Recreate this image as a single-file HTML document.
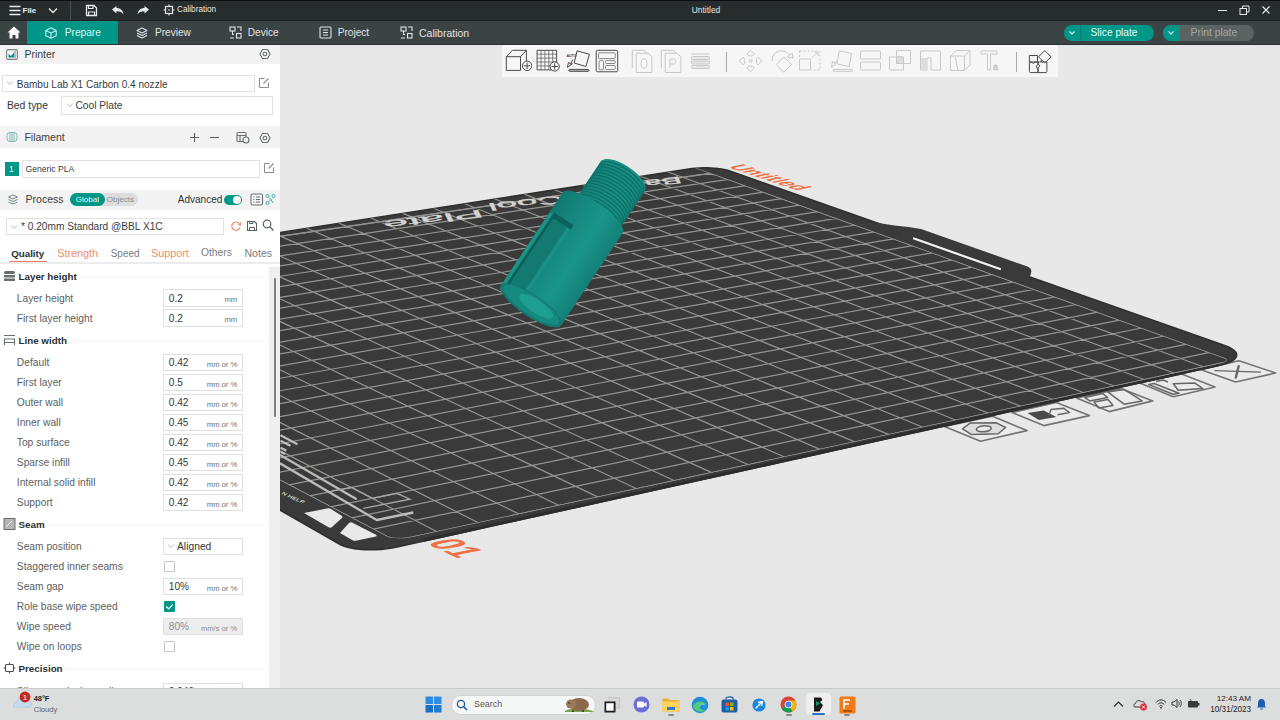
<!DOCTYPE html><html><head><meta charset="utf-8"><style>*{margin:0;padding:0;box-sizing:border-box}
html,body{width:1280px;height:720px;overflow:hidden;background:#e6e6e6;font-family:"Liberation Sans",sans-serif}
.a{position:absolute;white-space:nowrap}
#title{left:0;top:0;width:1280px;height:20px;background:#24292a;border-top:1px solid #101213}
#tabs{left:0;top:20px;width:1280px;height:25px;background:#353c3d}
#side{left:0;top:45px;width:280px;height:643px;background:#fff;overflow:hidden}
#view{left:280px;top:45px;width:1000px;height:643px;background:#e6e6e6;overflow:hidden}
#task{left:0;top:688px;width:1280px;height:32px;background:#dcdcdc;border-top:1px solid #cdcdcd}
.tt{color:#e8ecec;font-size:10.3px}
.hdr{left:0;width:280px;background:#f4f4f4}
.ht{font-size:10.5px;color:#363d3f}
.lbl{font-size:10.3px;color:#5b5f61;left:17px}
.hd{font-size:10px;font-weight:bold;color:#2a2f31;left:18px}
.inp{left:163px;width:80px;height:17px;border:1px solid #dedede;background:#fff}
.val{font-size:10.2px;color:#33393b;left:168px}
.unit{font-size:7.6px;color:#6d7173}
.sep{height:1px;background:#f0f0f0}
</style></head><body><div class="a" style="left:0px;top:0px;width:1280px;height:20px;background:#272c2c;border-top:1px solid #0d0f10"></div>
<div class="a" style="left:0px;top:20px;width:1280px;height:25px;background:#3c4344;border-top:1px solid #1d2122;border-bottom:1px solid #2c3233"></div>
<svg class="a" style="left:9px;top:5px;" width="12" height="11" viewBox="0 0 12 11"><g stroke="#e6e9e9" stroke-width="1.4" stroke-linecap="round"><path d="M1 1.5H11M1 5.5H11M1 9.5H11"/></g></svg>
<div class="a" style="left:22.5px;top:7.03px;font-size:8.0px;line-height:1;color:#e9ecec;font-weight:bold;">File</div>
<svg class="a" style="left:48px;top:7px;" width="10" height="7" viewBox="0 0 10 7"><path d="M1 1.5L5 5.5L9 1.5" fill="none" stroke="#e6e9e9" stroke-width="1.3"/></svg>
<div class="a" style="left:70px;top:1px;width:1px;height:19px;background:#474d4e"></div>
<svg class="a" style="left:85px;top:4px;" width="13" height="13" viewBox="0 0 13 13"><path d="M1.5 1.5H9L11.5 4V11.5H1.5Z" fill="none" stroke="#e6e9e9" stroke-width="1.3" stroke-linejoin="round"/><path d="M3.5 1.5V4.5H8V1.5M3.5 11.5V8H9.5V11.5" fill="none" stroke="#e6e9e9" stroke-width="1.2"/></svg>
<svg class="a" style="left:111px;top:5px;" width="13" height="10" viewBox="0 0 13 10"><path d="M1 4.5L5.5 1V3C9 3 12 5 12.5 9.5C11 7 9 6.2 5.5 6.2V8.5Z" fill="#e6e9e9"/></svg>
<svg class="a" style="left:137px;top:5px;" width="13" height="10" viewBox="0 0 13 10"><path d="M12 4.5L7.5 1V3C4 3 1 5 0.5 9.5C2 7 4 6.2 7.5 6.2V8.5Z" fill="#e6e9e9"/></svg>
<svg class="a" style="left:163px;top:4px;" width="12" height="12" viewBox="0 0 12 12"><rect x="2.5" y="2.5" width="7" height="7" fill="none" stroke="#e6e9e9" stroke-width="1.2"/><path d="M6 0.5V2.5M6 9.5V11.5M0.5 6H2.5M9.5 6H11.5" stroke="#e6e9e9" stroke-width="1.2"/><path d="M4.5 4.5L7.5 7.5M7.5 4.5L4.5 7.5" stroke="#9aa" stroke-width="0.8"/></svg>
<div class="a" style="left:177.0px;top:6.26px;font-size:8.2px;line-height:1;color:#e6e9e9;font-weight:normal;">Calibration</div>
<div class="a" style="left:506.0px;width:400px;text-align:center;top:6.39px;font-size:8.4px;line-height:1;color:#e6e9e9;font-weight:normal;">Untitled</div>
<div class="a" style="left:1218px;top:10px;width:9px;height:1px;background:#e6e9e9"></div>
<svg class="a" style="left:1239px;top:5px;" width="11" height="11" viewBox="0 0 11 11"><rect x="1" y="3.5" width="6.5" height="6" fill="none" stroke="#e6e9e9" stroke-width="1"/><path d="M3.5 3.5V1H10V7H7.5" fill="none" stroke="#e6e9e9" stroke-width="1"/></svg>
<svg class="a" style="left:1261px;top:5px;" width="10" height="10" viewBox="0 0 10 10"><path d="M1.5 1.5L8.5 8.5M8.5 1.5L1.5 8.5" stroke="#e6e9e9" stroke-width="1.2"/></svg>
<svg class="a" style="left:7px;top:26px;" width="14" height="13" viewBox="0 0 14 13"><path d="M7 0.5L13.5 6.5H11.5V12.5H8.5V9H5.5V12.5H2.5V6.5H0.5Z" fill="#fafafa"/></svg>
<div class="a" style="left:27px;top:21px;width:91px;height:23px;background:#009688"></div>
<svg class="a" style="left:45px;top:27px;" width="12" height="12" viewBox="0 0 12 12"><path d="M6 0.8L11.2 3.4V8.8L6 11.3L0.8 8.8V3.4Z M0.8 3.4L6 6L11.2 3.4 M6 6V11.3" fill="none" stroke="#b9f0ea" stroke-width="1.1" stroke-linejoin="round"/></svg>
<div class="a" style="left:64.7px;top:28.37px;font-size:10.2px;line-height:1;color:#d8f6f2;font-weight:normal;">Prepare</div>
<svg class="a" style="left:136px;top:27px;" width="12" height="12" viewBox="0 0 12 12"><g fill="none" stroke="#e0e4e4" stroke-width="1.1" stroke-linejoin="round"><path d="M6 1L11 3.5L6 6L1 3.5Z"/><path d="M1 6L6 8.5L11 6"/><path d="M1 8.5L6 11L11 8.5"/></g></svg>
<div class="a" style="left:155.0px;top:28.45px;font-size:10.1px;line-height:1;color:#e0e4e4;font-weight:normal;">Preview</div>
<svg class="a" style="left:229px;top:26px;" width="13" height="13" viewBox="0 0 13 13"><g fill="none" stroke="#e0e4e4" stroke-width="1.1"><rect x="1" y="1" width="5" height="4"/><rect x="7.5" y="7.5" width="4.5" height="4.5"/><path d="M3.5 5V8.5H5M8 1H12V5M1 12H5"/></g></svg>
<div class="a" style="left:247.8px;top:28.45px;font-size:10.1px;line-height:1;color:#e0e4e4;font-weight:normal;">Device</div>
<svg class="a" style="left:319px;top:26px;" width="13" height="13" viewBox="0 0 13 13"><g fill="none" stroke="#e0e4e4" stroke-width="1.1"><rect x="1" y="1" width="11" height="11" rx="1"/><path d="M4 4H9M4 6.5H9M4 9H9"/></g></svg>
<div class="a" style="left:337.7px;top:28.45px;font-size:10.1px;line-height:1;color:#e0e4e4;font-weight:normal;">Project</div>
<svg class="a" style="left:400px;top:26px;" width="13" height="13" viewBox="0 0 13 13"><g fill="none" stroke="#e0e4e4" stroke-width="1.1"><rect x="1" y="1" width="5" height="4"/><rect x="7.5" y="7.5" width="4.5" height="4.5"/><path d="M3.5 5V8.5H5M8 1H12V5M1 12H5"/></g></svg>
<div class="a" style="left:419.0px;top:28.11px;font-size:10.5px;line-height:1;color:#e0e4e4;font-weight:normal;">Calibration</div>
<div class="a" style="left:1064px;top:25px;width:90px;height:16px;background:#009688;border-radius:8px"></div>
<div class="a" style="left:1080px;top:25px;width:1px;height:16px;background:#0b7d73"></div>
<svg class="a" style="left:1067px;top:29px;" width="10" height="8" viewBox="0 0 10 8"><path d="M2.5 2.5L5 5L7.5 2.5" fill="none" stroke="#d8f6f2" stroke-width="1.1"/></svg>
<div class="a" style="left:1090.5px;top:27.87px;font-size:10.2px;line-height:1;color:#e6fbf8;font-weight:normal;">Slice plate</div>
<div class="a" style="left:1163px;top:25px;width:91px;height:16px;background:#5b6262;border-radius:8px"></div>
<div class="a" style="left:1163px;top:25px;width:17px;height:16px;background:#009688;border-radius:8px 0 0 8px"></div>
<svg class="a" style="left:1166px;top:29px;" width="10" height="8" viewBox="0 0 10 8"><path d="M2.5 2.5L5 5L7.5 2.5" fill="none" stroke="#d8f6f2" stroke-width="1.1"/></svg>
<div class="a" style="left:1190.5px;top:27.70px;font-size:10.4px;line-height:1;color:#a3a8a8;font-weight:normal;">Print plate</div>
<div class="a" style="left:0px;top:45px;width:280px;height:643px;background:#ffffff"></div>
<div class="a" style="left:0px;top:45px;width:280px;height:19px;background:#f3f3f3"></div>
<div class="a" style="left:0px;top:126px;width:280px;height:22px;background:#f3f3f3"></div>
<div class="a" style="left:0px;top:190px;width:280px;height:19.5px;background:#f3f3f3"></div>
<svg class="a" style="left:6px;top:49px;" width="12" height="11" viewBox="0 0 12 11"><rect x="0.6" y="0.6" width="10.8" height="9.8" rx="1.5" fill="none" stroke="#7a8080" stroke-width="1.1"/><path d="M2.5 8.5V5L5 7L8 3.5V8.5Z" fill="#009688"/><path d="M9 2V9" stroke="#7a8080" stroke-width="1"/></svg>
<div class="a" style="left:24.4px;top:49.31px;font-size:10.5px;line-height:1;color:#3a4042;font-weight:normal;">Printer</div>
<svg class="a" style="left:259px;top:48px;" width="12" height="12" viewBox="0 0 12 12"><path d="M0.9 6L3.5 1.5H8.5L11.1 6L8.5 10.5H3.5Z" fill="none" stroke="#6a7072" stroke-width="1.1" stroke-linejoin="round"/><circle cx="6" cy="6" r="1.8" fill="none" stroke="#6a7072" stroke-width="1.1"/></svg>
<div class="a" style="left:2px;top:75px;width:253px;height:17px;border:1px solid #e2e2e2;background:#fff"></div>
<svg class="a" style="left:6px;top:80px;" width="8" height="6" viewBox="0 0 8 6"><path d="M1 1.5L4 4.5L7 1.5" fill="none" stroke="#a9adae" stroke-width="0.9"/></svg>
<div class="a" style="left:16.7px;top:79.69px;font-size:10.05px;line-height:1;color:#3a4042;font-weight:normal;">Bambu Lab X1 Carbon 0.4 nozzle</div>
<svg class="a" style="left:258px;top:77px;" width="12" height="12" viewBox="0 0 12 12"><path d="M6.5 1.5H2.2C1.8 1.5 1.5 1.8 1.5 2.2V9.8C1.5 10.2 1.8 10.5 2.2 10.5H9.8C10.2 10.5 10.5 10.2 10.5 9.8V5.5" fill="none" stroke="#8a8e90" stroke-width="1.1"/><path d="M5.5 6.5L10.5 1.5" stroke="#8a8e90" stroke-width="1.1"/></svg>
<div class="a" style="left:6.9px;top:100.60px;font-size:10.4px;line-height:1;color:#2f3537;font-weight:normal;">Bed type</div>
<div class="a" style="left:61px;top:96px;width:212px;height:19px;border:1px solid #e2e2e2;background:#fff"></div>
<svg class="a" style="left:66px;top:102px;" width="8" height="6" viewBox="0 0 8 6"><path d="M1 1.5L4 4.5L7 1.5" fill="none" stroke="#a9adae" stroke-width="0.9"/></svg>
<div class="a" style="left:75.5px;top:100.77px;font-size:10.2px;line-height:1;color:#3a4042;font-weight:normal;">Cool Plate</div>
<svg class="a" style="left:6px;top:131px;" width="12" height="12" viewBox="0 0 12 12"><g fill="none" stroke="#7fb9b2" stroke-width="1"><rect x="1" y="1.5" width="10" height="9" rx="3"/><path d="M4 1.5V10.5M6 1.5V10.5M8 1.5V10.5"/></g></svg>
<div class="a" style="left:24.4px;top:132.41px;font-size:10.5px;line-height:1;color:#3a4042;font-weight:normal;">Filament</div>
<svg class="a" style="left:189px;top:132px;" width="11" height="11" viewBox="0 0 11 11"><path d="M5.5 1V10M1 5.5H10" stroke="#5a6062" stroke-width="1.1"/></svg>
<svg class="a" style="left:209px;top:132px;" width="11" height="11" viewBox="0 0 11 11"><path d="M1 5.5H10" stroke="#5a6062" stroke-width="1.1"/></svg>
<svg class="a" style="left:236px;top:131px;" width="14" height="13" viewBox="0 0 14 13"><g fill="none" stroke="#6a7072" stroke-width="1.1"><rect x="1" y="1.5" width="9" height="9" rx="1"/><path d="M1 4.5H10M4 4.5V10.5"/><circle cx="10" cy="9" r="3" fill="#f3f3f3"/></g></svg>
<svg class="a" style="left:259px;top:132px;" width="12" height="12" viewBox="0 0 12 12"><path d="M0.9 6L3.5 1.5H8.5L11.1 6L8.5 10.5H3.5Z" fill="none" stroke="#6a7072" stroke-width="1.1" stroke-linejoin="round"/><circle cx="6" cy="6" r="1.8" fill="none" stroke="#6a7072" stroke-width="1.1"/></svg>
<div class="a" style="left:5px;top:162px;width:14px;height:14px;background:#009688"></div>
<div class="a" style="left:9.0px;top:165.30px;font-size:8.5px;line-height:1;color:#e6fbf8;font-weight:normal;">1</div>
<div class="a" style="left:22px;top:160px;width:238px;height:17.5px;border:1px solid #e2e2e2;background:#fff"></div>
<div class="a" style="left:25.5px;top:164.72px;font-size:8.6px;line-height:1;color:#3a4042;font-weight:normal;">Generic PLA</div>
<svg class="a" style="left:263px;top:162px;" width="12" height="12" viewBox="0 0 12 12"><path d="M6.5 1.5H2.2C1.8 1.5 1.5 1.8 1.5 2.2V9.8C1.5 10.2 1.8 10.5 2.2 10.5H9.8C10.2 10.5 10.5 10.2 10.5 9.8V5.5" fill="none" stroke="#8a8e90" stroke-width="1.1"/><path d="M5.5 6.5L10.5 1.5" stroke="#8a8e90" stroke-width="1.1"/></svg>
<svg class="a" style="left:7px;top:194px;" width="12" height="12" viewBox="0 0 12 12"><g fill="none" stroke="#7a8a88" stroke-width="1"><path d="M1.5 3L6 1L10.5 3L6 5Z"/><path d="M1.5 5.5L6 7.5L10.5 5.5M1.5 8L6 10L10.5 8"/></g></svg>
<div class="a" style="left:25.6px;top:194.31px;font-size:10.5px;line-height:1;color:#3a4042;font-weight:normal;">Process</div>
<div class="a" style="left:70px;top:193px;width:68px;height:13px;background:#dddddd;border-radius:7px"></div>
<div class="a" style="left:70px;top:193px;width:35px;height:13px;background:#009688;border-radius:7px"></div>
<div class="a" style="left:75.8px;top:195.93px;font-size:8.0px;line-height:1;color:#e6fbf8;font-weight:normal;">Global</div>
<div class="a" style="left:106.7px;top:195.84px;font-size:8.1px;line-height:1;color:#8a8e90;font-weight:normal;">Objects</div>
<div class="a" style="left:177.8px;top:195.03px;font-size:10.0px;line-height:1;color:#2f3537;font-weight:normal;">Advanced</div>
<div class="a" style="left:224px;top:195px;width:18px;height:10px;background:#009688;border-radius:5px"></div>
<div class="a" style="left:233px;top:196px;width:8px;height:8px;background:#fff;border-radius:4px"></div>
<svg class="a" style="left:250px;top:193px;" width="14" height="13" viewBox="0 0 14 13"><g fill="none" stroke="#6a7072" stroke-width="1.1"><rect x="1" y="1" width="11.5" height="11" rx="1.5"/><path d="M3.5 4H4.5M6 4H10M3.5 6.5H4.5M6 6.5H10M3.5 9H4.5M6 9H10"/></g></svg>
<svg class="a" style="left:265px;top:193px;" width="11" height="13" viewBox="0 0 11 13"><g fill="none" stroke="#4cb3a8" stroke-width="1"><circle cx="2.5" cy="3" r="1.6"/><circle cx="8.5" cy="3" r="1.6"/><circle cx="2.5" cy="10" r="1.6"/><path d="M4 4.5L8.5 10M4 8.5L7 5.5"/></g></svg>
<div class="a" style="left:6px;top:218px;width:218px;height:17px;border:1px solid #e2e2e2;background:#fff"></div>
<svg class="a" style="left:10px;top:224px;" width="8" height="6" viewBox="0 0 8 6"><path d="M1 1.5L4 4.5L7 1.5" fill="none" stroke="#a9adae" stroke-width="0.9"/></svg>
<div class="a" style="left:21.0px;top:221.51px;font-size:10.15px;line-height:1;color:#3a4042;font-weight:normal;">* 0.20mm Standard @BBL X1C</div>
<svg class="a" style="left:230px;top:220px;" width="12" height="12" viewBox="0 0 12 12"><path d="M9.8 4.3A4.2 4.2 0 1 0 10 7.5" fill="none" stroke="#ee8a63" stroke-width="1.1"/><path d="M8 4.5L10.5 5L10.8 2.3" fill="none" stroke="#ee8a63" stroke-width="1.1"/></svg>
<svg class="a" style="left:246px;top:220px;" width="12" height="12" viewBox="0 0 12 12"><path d="M1.5 1.5H8.5L10.5 3.5V10.5H1.5Z" fill="none" stroke="#5a6062" stroke-width="1.1"/><path d="M3.5 10.5V7.5H8.5V10.5M3.5 1.5V3.5H7V1.5" fill="none" stroke="#5a6062" stroke-width="1"/></svg>
<svg class="a" style="left:262px;top:219px;" width="13" height="13" viewBox="0 0 13 13"><circle cx="5" cy="5" r="3.8" fill="none" stroke="#5a6062" stroke-width="1.2"/><path d="M7.8 7.8L11.5 11.5" stroke="#5a6062" stroke-width="1.3"/></svg>
<div class="a" style="left:11.2px;top:248.75px;font-size:9.75px;line-height:1;color:#2a2f31;font-weight:bold;">Quality</div>
<div class="a" style="left:9px;top:260.5px;width:38px;height:2px;background:#e8795a;border-radius:1px"></div>
<div class="a" style="left:57.3px;top:247.86px;font-size:10.8px;line-height:1;color:#ec8e6c;font-weight:normal;">Strength</div>
<div class="a" style="left:110.7px;top:248.53px;font-size:10.0px;line-height:1;color:#7a7e80;font-weight:normal;">Speed</div>
<div class="a" style="left:151.0px;top:247.86px;font-size:10.8px;line-height:1;color:#ec8e6c;font-weight:normal;">Support</div>
<div class="a" style="left:201.0px;top:248.28px;font-size:10.3px;line-height:1;color:#7a7e80;font-weight:normal;">Others</div>
<div class="a" style="left:244.4px;top:248.03px;font-size:10.6px;line-height:1;color:#7a7e80;font-weight:normal;">Notes</div>
<div class="a" style="left:0px;top:262px;width:280px;height:2px;background:#ececec"></div>
<div class="a" style="left:269px;top:267px;width:11px;height:421px;background:#efefef"></div>
<div class="a" style="left:274px;top:278px;width:1.6px;height:139px;background:#7d7d7d;border-radius:1px"></div>
<svg class="a" style="left:3px;top:270px;" width="13" height="12" viewBox="0 0 13 12"><g fill="#6a6e70"><rect x="1" y="1" width="11" height="3" rx="1.5"/><rect x="1" y="5" width="11" height="2.5"/><rect x="1" y="8.5" width="11" height="2.5"/></g></svg>
<div class="a" style="left:18.5px;top:271.70px;font-size:9.8px;line-height:1;color:#2a2f31;font-weight:bold;">Layer height</div>
<div class="a" style="left:80px;top:276px;width:186px;height:1px;background:#f2f2f2"></div>
<div class="a" style="left:16.8px;top:293.52px;font-size:10.25px;line-height:1;color:#5b5f61;font-weight:normal;">Layer height</div>
<div class="a" style="left:163px;top:289.4px;width:80px;height:17.2px;border:1px solid #e0e0e0;background:#fff"></div>
<div class="a" style="left:168.8px;top:293.65px;font-size:10.1px;line-height:1;color:#33393b;font-weight:normal;">0.2</div>
<div class="a" style="right:1042.8px;top:296.27px;font-size:7.6px;line-height:1;color:#6d7173;font-weight:normal;">mm</div>
<div class="a" style="left:16.8px;top:313.52px;font-size:10.25px;line-height:1;color:#5b5f61;font-weight:normal;">First layer height</div>
<div class="a" style="left:163px;top:309.4px;width:80px;height:17.2px;border:1px solid #e0e0e0;background:#fff"></div>
<div class="a" style="left:168.8px;top:313.65px;font-size:10.1px;line-height:1;color:#33393b;font-weight:normal;">0.2</div>
<div class="a" style="right:1042.8px;top:316.27px;font-size:7.6px;line-height:1;color:#6d7173;font-weight:normal;">mm</div>
<svg class="a" style="left:3px;top:334px;" width="13" height="12" viewBox="0 0 13 12"><g fill="none" stroke="#6a6e70" stroke-width="1.1"><path d="M1 1.5H12M1 5H12M1 8.5H12"/><path d="M1.5 5V11M11.5 5V11"/></g></svg>
<div class="a" style="left:18.5px;top:335.70px;font-size:9.8px;line-height:1;color:#2a2f31;font-weight:bold;">Line width</div>
<div class="a" style="left:72px;top:340px;width:194px;height:1px;background:#f2f2f2"></div>
<div class="a" style="left:16.8px;top:358.02px;font-size:10.25px;line-height:1;color:#5b5f61;font-weight:normal;">Default</div>
<div class="a" style="left:163px;top:353.9px;width:80px;height:17.2px;border:1px solid #e0e0e0;background:#fff"></div>
<div class="a" style="left:168.8px;top:358.15px;font-size:10.1px;line-height:1;color:#33393b;font-weight:normal;">0.42</div>
<div class="a" style="right:1042.8px;top:360.77px;font-size:7.6px;line-height:1;color:#6d7173;font-weight:normal;">mm or %</div>
<div class="a" style="left:16.8px;top:378.02px;font-size:10.25px;line-height:1;color:#5b5f61;font-weight:normal;">First layer</div>
<div class="a" style="left:163px;top:373.9px;width:80px;height:17.2px;border:1px solid #e0e0e0;background:#fff"></div>
<div class="a" style="left:168.8px;top:378.15px;font-size:10.1px;line-height:1;color:#33393b;font-weight:normal;">0.5</div>
<div class="a" style="right:1042.8px;top:380.77px;font-size:7.6px;line-height:1;color:#6d7173;font-weight:normal;">mm or %</div>
<div class="a" style="left:16.8px;top:398.02px;font-size:10.25px;line-height:1;color:#5b5f61;font-weight:normal;">Outer wall</div>
<div class="a" style="left:163px;top:393.9px;width:80px;height:17.2px;border:1px solid #e0e0e0;background:#fff"></div>
<div class="a" style="left:168.8px;top:398.15px;font-size:10.1px;line-height:1;color:#33393b;font-weight:normal;">0.42</div>
<div class="a" style="right:1042.8px;top:400.77px;font-size:7.6px;line-height:1;color:#6d7173;font-weight:normal;">mm or %</div>
<div class="a" style="left:16.8px;top:418.02px;font-size:10.25px;line-height:1;color:#5b5f61;font-weight:normal;">Inner wall</div>
<div class="a" style="left:163px;top:413.9px;width:80px;height:17.2px;border:1px solid #e0e0e0;background:#fff"></div>
<div class="a" style="left:168.8px;top:418.15px;font-size:10.1px;line-height:1;color:#33393b;font-weight:normal;">0.45</div>
<div class="a" style="right:1042.8px;top:420.77px;font-size:7.6px;line-height:1;color:#6d7173;font-weight:normal;">mm or %</div>
<div class="a" style="left:16.8px;top:438.02px;font-size:10.25px;line-height:1;color:#5b5f61;font-weight:normal;">Top surface</div>
<div class="a" style="left:163px;top:433.9px;width:80px;height:17.2px;border:1px solid #e0e0e0;background:#fff"></div>
<div class="a" style="left:168.8px;top:438.15px;font-size:10.1px;line-height:1;color:#33393b;font-weight:normal;">0.42</div>
<div class="a" style="right:1042.8px;top:440.77px;font-size:7.6px;line-height:1;color:#6d7173;font-weight:normal;">mm or %</div>
<div class="a" style="left:16.8px;top:458.02px;font-size:10.25px;line-height:1;color:#5b5f61;font-weight:normal;">Sparse infill</div>
<div class="a" style="left:163px;top:453.9px;width:80px;height:17.2px;border:1px solid #e0e0e0;background:#fff"></div>
<div class="a" style="left:168.8px;top:458.15px;font-size:10.1px;line-height:1;color:#33393b;font-weight:normal;">0.45</div>
<div class="a" style="right:1042.8px;top:460.77px;font-size:7.6px;line-height:1;color:#6d7173;font-weight:normal;">mm or %</div>
<div class="a" style="left:16.8px;top:478.02px;font-size:10.25px;line-height:1;color:#5b5f61;font-weight:normal;">Internal solid infill</div>
<div class="a" style="left:163px;top:473.9px;width:80px;height:17.2px;border:1px solid #e0e0e0;background:#fff"></div>
<div class="a" style="left:168.8px;top:478.15px;font-size:10.1px;line-height:1;color:#33393b;font-weight:normal;">0.42</div>
<div class="a" style="right:1042.8px;top:480.77px;font-size:7.6px;line-height:1;color:#6d7173;font-weight:normal;">mm or %</div>
<div class="a" style="left:16.8px;top:498.02px;font-size:10.25px;line-height:1;color:#5b5f61;font-weight:normal;">Support</div>
<div class="a" style="left:163px;top:493.9px;width:80px;height:17.2px;border:1px solid #e0e0e0;background:#fff"></div>
<div class="a" style="left:168.8px;top:498.15px;font-size:10.1px;line-height:1;color:#33393b;font-weight:normal;">0.42</div>
<div class="a" style="right:1042.8px;top:500.77px;font-size:7.6px;line-height:1;color:#6d7173;font-weight:normal;">mm or %</div>
<svg class="a" style="left:3px;top:518px;" width="13" height="12" viewBox="0 0 13 12"><rect x="1" y="0.5" width="11" height="11" fill="#b5b5b5" stroke="#6a6e70" stroke-width="1"/><path d="M3 9L9 3" stroke="#eee" stroke-width="1"/></svg>
<div class="a" style="left:18.5px;top:519.70px;font-size:9.8px;line-height:1;color:#2a2f31;font-weight:bold;">Seam</div>
<div class="a" style="left:48px;top:524px;width:218px;height:1px;background:#f2f2f2"></div>
<div class="a" style="left:16.8px;top:542.02px;font-size:10.25px;line-height:1;color:#5b5f61;font-weight:normal;">Seam position</div>
<div class="a" style="left:163px;top:537.5px;width:80px;height:17.2px;border:1px solid #e0e0e0;background:#fff"></div>
<svg class="a" style="left:167px;top:543px;" width="8" height="6" viewBox="0 0 8 6"><path d="M1 1.5L4 4.5L7 1.5" fill="none" stroke="#a9adae" stroke-width="0.9"/></svg>
<div class="a" style="left:177.0px;top:541.98px;font-size:10.3px;line-height:1;color:#33393b;font-weight:normal;">Aligned</div>
<div class="a" style="left:16.8px;top:562.02px;font-size:10.25px;line-height:1;color:#5b5f61;font-weight:normal;">Staggered inner seams</div>
<div class="a" style="left:164px;top:561px;width:11px;height:11px;border:1px solid #c8c8c8;background:#fff;border-radius:1px"></div>
<div class="a" style="left:16.8px;top:582.02px;font-size:10.25px;line-height:1;color:#5b5f61;font-weight:normal;">Seam gap</div>
<div class="a" style="left:163px;top:577.9000000000001px;width:80px;height:17.2px;border:1px solid #e0e0e0;background:#fff"></div>
<div class="a" style="left:168.8px;top:582.15px;font-size:10.1px;line-height:1;color:#33393b;font-weight:normal;">10%</div>
<div class="a" style="right:1042.8px;top:584.77px;font-size:7.6px;line-height:1;color:#6d7173;font-weight:normal;">mm or %</div>
<div class="a" style="left:16.8px;top:602.02px;font-size:10.25px;line-height:1;color:#5b5f61;font-weight:normal;">Role base wipe speed</div>
<div class="a" style="left:164px;top:600.5px;width:11px;height:11px;background:#009688;border-radius:1px"></div>
<svg class="a" style="left:164px;top:600.5px;" width="11" height="11" viewBox="0 0 11 11"><path d="M2.3 5.5L4.6 7.8L8.8 3.3" fill="none" stroke="#fff" stroke-width="1.2"/></svg>
<div class="a" style="left:16.8px;top:622.02px;font-size:10.25px;line-height:1;color:#5b5f61;font-weight:normal;">Wipe speed</div>
<div class="a" style="left:163px;top:617.9000000000001px;width:80px;height:17.2px;border:1px solid #e0e0e0;background:#ededed"></div>
<div class="a" style="left:168.8px;top:622.15px;font-size:10.1px;line-height:1;color:#8a8e90;font-weight:normal;">80%</div>
<div class="a" style="right:1042.8px;top:624.77px;font-size:7.6px;line-height:1;color:#8a8e90;font-weight:normal;">mm/s or %</div>
<div class="a" style="left:16.8px;top:642.02px;font-size:10.25px;line-height:1;color:#5b5f61;font-weight:normal;">Wipe on loops</div>
<div class="a" style="left:164px;top:641px;width:11px;height:11px;border:1px solid #c8c8c8;background:#fff;border-radius:1px"></div>
<svg class="a" style="left:3px;top:662px;" width="13" height="12" viewBox="0 0 13 12"><g fill="none" stroke="#4a4e50" stroke-width="1.1"><rect x="2.5" y="2.5" width="8" height="7" rx="1"/><path d="M6.5 0.5V2.5M6.5 9.5V11.5M0.5 6H2.5M10.5 6H12.5"/></g></svg>
<div class="a" style="left:18.5px;top:663.70px;font-size:9.8px;line-height:1;color:#2a2f31;font-weight:bold;">Precision</div>
<div class="a" style="left:64px;top:668px;width:202px;height:1px;background:#f2f2f2"></div>
<div class="a" style="left:16.8px;top:687.02px;font-size:10.25px;line-height:1;color:#5b5f61;font-weight:normal;">Slice gap closing radius</div>
<div class="a" style="left:163px;top:682.9000000000001px;width:80px;height:17.2px;border:1px solid #e0e0e0;background:#fff"></div>
<div class="a" style="left:168.8px;top:687.15px;font-size:10.1px;line-height:1;color:#33393b;font-weight:normal;">0.049</div>
<div class="a" style="right:1042.8px;top:689.77px;font-size:7.6px;line-height:1;color:#6d7173;font-weight:normal;">mm</div>
<div class="a" style="left:280px;top:45px;width:1000px;height:643px;background:#e8e8e8"></div>
<svg class="a" style="left:280px;top:45px" width="1000" height="643" viewBox="280 45 1000 643"><defs>
<linearGradient id="gbody" x1="0" y1="-38" x2="0" y2="35" gradientUnits="userSpaceOnUse">
<stop offset="0" stop-color="#117970"/><stop offset="0.3" stop-color="#15877d"/><stop offset="0.65" stop-color="#1a958a"/><stop offset="1" stop-color="#137f76"/></linearGradient>
<linearGradient id="gth" x1="0" y1="-24" x2="0" y2="30" gradientUnits="userSpaceOnUse">
<stop offset="0" stop-color="#0f756c" stop-opacity="0.6"/><stop offset="0.6" stop-color="#1a978b" stop-opacity="0"/><stop offset="1" stop-color="#0f756c" stop-opacity="0.5"/></linearGradient>
</defs><g fill="#eaeaea" stroke="#747474" stroke-width="1.6" stroke-linejoin="round"><path d="M944.5 426.5 L992.5 416.3 L1027.0 430.6 L980.5 441.3 Z"/><path d="M1012.0 412.5 L1056.3 402.5 L1089.4 415.6 L1043.8 425.6 Z"/><path d="M1076.6 398.0 L1120.8 388.6 L1152.8 400.9 L1109.3 411.6 Z"/><path d="M1139.7 382.9 L1181.5 373.9 L1215.1 387.0 L1173.3 396.8 Z"/><path d="M1201.1 369.8 L1238.9 360.7 L1275.7 373.0 L1235.6 382.0 Z"/></g><g fill="none" stroke="#666" stroke-width="1.5" stroke-linejoin="round"><path d="M962.5 428.8 L970.0 423.1 L996.3 422.8 L1005.6 427.5 L998.1 433.8 L971.3 434.4 Z" fill="#dedede"/><ellipse cx="983.8" cy="428.8" rx="7.5" ry="3" fill="#eaeaea" transform="rotate(-4 983.8 428.8)"/><path d="M1027.5 413.1 L1043.8 410.6 L1056.3 416.9 L1038.8 420.0 Z" fill="#4a4a4a" stroke="none"/><path d="M1049 415 L1051 409.5 L1063.5 408.2 L1069.5 412.6 L1057.5 414.8"/><path d="M1084.8 397.6 L1102.8 393.5 L1107.7 397.6 L1089.7 400.9 Z"/><path d="M1107.7 391.9 L1124.1 389.4 L1142.1 400.9 L1124.1 404.2 Z"/><path d="M1094.0 402.0 L1108.0 399.5 L1113.0 405.5 L1099.0 408.0 Z"/><path d="M1148.7 384.5 L1154.0 383.5 L1179.0 393.3 L1173.0 394.3 Z"/><path d="M1173.3 383.7 L1194.6 382.9 L1202.8 388.6 L1178.2 390.2 Z"/><path d="M1156 381.5 L1163 380 L1168 382" /><path d="M1214.3 370.6 L1261 372.2" stroke-width="1.3"/><path d="M1238.9 365.2 L1235.6 378.5" stroke-width="2.4"/></g><path d="M1219.7 365.2 L1224.3 364.1 L1228.3 362.7 L1231.6 361.2 L1234.1 359.6 L1235.7 357.8 L1236.6 356.0 L1236.6 354.2 L1235.8 352.3 L1234.1 350.5 L1231.7 348.8 L1228.5 347.1 L1224.6 345.6 L729.1 170.8 L726.8 170.1 L724.2 169.5 L721.2 169.0 L717.9 168.5 L714.4 168.2 L710.7 168.0 L706.9 167.8 L703.1 167.8 L699.3 168.0 L695.6 168.2 L692.1 168.5 L688.7 169.0 L-72.5 287.3 L-76.1 287.9 L-79.5 288.6 L-82.5 289.4 L-85.2 290.3 L-87.5 291.3 L-89.4 292.3 L-90.7 293.3 L-91.6 294.3 L-91.9 295.3 L-91.8 296.3 L-91.1 297.2 L-89.8 298.1 L339.3 544.0 L342.2 545.4 L345.7 546.7 L349.8 547.7 L354.3 548.6 L359.2 549.2 L364.5 549.6 L369.9 549.8 L375.5 549.7 L381.1 549.4 L386.6 548.8 L392.0 548.0 L397.0 547.0 Z" fill="#393a39" stroke="#2e2f2e" stroke-width="1.6"/><path d="M423.7 541.1 L456.1 534.0 L488.1 526.9 L519.6 519.9 L550.8 513.1 L581.6 506.3 L612.0 499.5 L642.0 492.9 L671.6 486.4 L700.9 479.9 L729.8 473.5 L758.4 467.2 L786.7 460.9 L814.6 454.8 L842.1 448.7 L869.4 442.7 L896.3 436.7 L922.9 430.8 L949.2 425.0 L975.2 419.3 L1000.9 413.6 L1026.3 408.0 L1051.5 402.4 L1076.3 396.9 L1100.9 391.5 L1125.2 386.1 L1149.2 380.8 L1172.9 375.6 L1196.4 370.4 L1219.7 365.2" stroke="#2c2d2c" stroke-width="3" fill="none" transform="translate(0 -0.8)"/><path d="M870 221 C884 225 905 226 921 229 L1026 266 C1031 267.5 1032 270 1031 273 L1029 280 L1000 275 Z" fill="#393a39"/><clipPath id="gclip"><path d="M1221.2 363.2 L1222.9 362.8 L1224.4 362.3 L1225.5 361.7 L1226.2 361.1 L1226.7 360.5 L1226.7 359.8 L1226.4 359.2 L1225.8 358.6 L1224.8 358.0 L1223.4 357.4 L650.0 151.3 L648.9 150.9 L647.4 150.6 L645.8 150.4 L644.0 150.2 L642.1 150.1 L640.1 150.0 L638.0 150.0 L636.0 150.1 L634.1 150.3 L632.2 150.5 L-126.8 255.9 L-129.1 256.3 L-131.2 256.7 L-133.1 257.2 L-134.7 257.7 L-135.9 258.3 L-136.8 258.9 L-137.3 259.5 L-137.4 260.0 L-137.0 260.6 L-136.3 261.1 L386.2 536.1 L387.8 536.8 L389.8 537.4 L392.0 537.8 L394.6 538.1 L397.4 538.3 L400.3 538.3 L403.3 538.2 L406.3 538.0 L409.2 537.6 L411.9 537.1 Z"/></clipPath><clipPath id="pclip"><path d="M1219.7 365.2 L1224.3 364.1 L1228.3 362.7 L1231.6 361.2 L1234.1 359.6 L1235.7 357.8 L1236.6 356.0 L1236.6 354.2 L1235.8 352.3 L1234.1 350.5 L1231.7 348.8 L1228.5 347.1 L1224.6 345.6 L729.1 170.8 L726.8 170.1 L724.2 169.5 L721.2 169.0 L717.9 168.5 L714.4 168.2 L710.7 168.0 L706.9 167.8 L703.1 167.8 L699.3 168.0 L695.6 168.2 L692.1 168.5 L688.7 169.0 L-72.5 287.3 L-76.1 287.9 L-79.5 288.6 L-82.5 289.4 L-85.2 290.3 L-87.5 291.3 L-89.4 292.3 L-90.7 293.3 L-91.6 294.3 L-91.9 295.3 L-91.8 296.3 L-91.1 297.2 L-89.8 298.1 L339.3 544.0 L342.2 545.4 L345.7 546.7 L349.8 547.7 L354.3 548.6 L359.2 549.2 L364.5 549.6 L369.9 549.8 L375.5 549.7 L381.1 549.4 L386.6 548.8 L392.0 548.0 L397.0 547.0 Z"/></clipPath><g clip-path="url(#pclip)"><path d="M395.0 540.7L-96.1 282.3M437.1 531.7L-57.5 276.7M478.4 522.8L-19.4 271.2M519.0 514.1L18.1 265.7M559.0 505.5L55.0 260.4M598.2 497.1L91.4 255.1M636.7 488.8L127.3 249.9M674.6 480.7L162.7 244.8M711.9 472.6L197.6 239.7M748.5 464.8L232.0 234.8M784.5 457.0L265.9 229.8M820.0 449.4L299.4 225.0M854.8 441.9L332.3 220.2M889.1 434.6L364.9 215.5M922.9 427.3L397.0 210.9M956.1 420.2L428.6 206.3M988.7 413.2L459.9 201.8M1020.9 406.3L490.7 197.3M1052.6 399.5L521.1 192.9M1083.8 392.8L551.1 188.5M1114.5 386.2L580.8 184.3M1144.7 379.7L610.0 180.0M1174.5 373.3L638.9 175.8M1203.9 367.0L667.4 171.7M1232.8 360.7L695.5 167.6M395.0 540.7L1232.8 360.7M373.2 529.2L1209.6 352.4M351.6 517.9L1186.7 344.2M330.5 506.8L1164.0 336.0M309.6 495.8L1141.7 328.0M289.0 484.9L1119.6 320.1M268.7 474.3L1097.8 312.2M248.8 463.8L1076.2 304.5M229.1 453.4L1054.9 296.8M209.7 443.2L1033.9 289.3M190.6 433.1L1013.1 281.8M171.7 423.2L992.6 274.4M153.1 413.4L972.3 267.1M134.8 403.8L952.2 259.9M116.7 394.2L932.3 252.8M98.8 384.8L912.7 245.7M81.2 375.6L893.3 238.8M63.9 366.4L874.2 231.9M46.8 357.4L855.2 225.0M29.9 348.5L836.5 218.3M13.2 339.8L818.0 211.7M-3.3 331.1L799.6 205.1M-19.5 322.6L781.5 198.6M-35.5 314.1L763.6 192.1M-51.4 305.8L745.9 185.7M-67.0 297.6L728.3 179.4M-82.4 289.5L711.0 173.2" stroke="#949593" stroke-width="1.2" fill="none" clip-path="url(#gclip)"/><path d="M1221.2 363.2 L1222.9 362.8 L1224.4 362.3 L1225.5 361.7 L1226.2 361.1 L1226.7 360.5 L1226.7 359.8 L1226.4 359.2 L1225.8 358.6 L1224.8 358.0 L1223.4 357.4 L717.9 175.7 L716.7 175.3 L715.2 175.0 L713.5 174.7 L711.7 174.5 L709.7 174.4 L707.7 174.4 L705.6 174.4 L703.6 174.5 L701.6 174.6 L699.7 174.8 L-66.8 287.2 L-69.2 287.6 L-71.3 288.0 L-73.2 288.6 L-74.8 289.1 L-76.0 289.7 L-76.9 290.4 L-77.3 291.0 L-77.4 291.6 L-77.0 292.2 L-76.2 292.7 L386.2 536.1 L387.8 536.8 L389.8 537.4 L392.0 537.8 L394.6 538.1 L397.4 538.3 L400.3 538.3 L403.3 538.2 L406.3 538.0 L409.2 537.6 L411.9 537.1 Z" stroke="#949593" stroke-width="1.2" fill="none" clip-path="url(#gclip)"/></g><path d="M914 238.5 L1000 269" stroke="#f2f2f2" stroke-width="2.2" stroke-linecap="round"/><path d="M304 513 L327 508.5 Q329 508 331 509 L342 516 Q343 517 342 518 L332 527 Q331 528 329 527.5 Z" fill="#e9e9e9"/><path d="M340 533 L349 523 Q350.5 522 352 522.5 L376.5 535 Q377 536 376 536.5 L357 540.5 Q355 541 353 540.5 Z" fill="#e9e9e9"/><g stroke="#bdbdbb" stroke-width="2.3" fill="none" stroke-linejoin="round"><path d="M280 455 L356.7 499.2"/><path d="M280 463.3 L376.7 520 L413.3 512.5"/><path d="M280.5 435.3 L297.4 444.3"/><path d="M280.5 440.8 L290.5 445.7"/><path d="M280.5 447.8 L286.3 450.6"/><path d="M280.5 452 L285 454"/></g><path d="M331.7 490.8 L351.7 487.5 L372.5 498.3 L396.7 493.3 L410 499.2 L363.3 508.3" stroke="#a8a9a7" stroke-width="1.3" fill="none"/><text transform="matrix(1 0.45 -0.6 0.6 281 494)" font-family="Liberation Sans" font-weight="bold" font-size="6" fill="#c8c8c8">N HELP</text><text transform="matrix(-3.3 0.4 -0.45 -0.9 481 209.5)" font-family="Liberation Sans" font-size="12" fill="#d4d4d2" stroke="#d4d4d2" stroke-width="0.3" lengthAdjust="spacingAndGlyphs" textLength="30">Plate</text><text transform="matrix(-2.9 0.31 -0.4 -0.85 562.5 195.5)" font-family="Liberation Sans" font-size="12" fill="#d4d4d2" stroke="#d4d4d2" stroke-width="0.3" lengthAdjust="spacingAndGlyphs" textLength="26">Cool</text><text transform="matrix(-2.97 0.34 -0.35 -0.78 680 176.5)" font-family="Liberation Sans" font-size="12" fill="#d4d4d2" stroke="#d4d4d2" stroke-width="0.3" lengthAdjust="spacingAndGlyphs" textLength="32">Bambu</text><text transform="matrix(1.36 0.455 -1.85 0.37 727 167)" font-family="Liberation Sans" font-weight="bold" font-size="12" fill="#ef7144" textLength="52" lengthAdjust="spacingAndGlyphs">Untitled</text><text transform="matrix(2.43 1.16 -3.5 0.68 425.5 543)" font-family="Liberation Sans" font-weight="bold" font-size="12" fill="#ef7144">01</text><g transform="translate(507 344.5) rotate(-56.3)"><path d="M156 -23.5 L204 -23.5 A11 26.5 0 0 1 204 29.5 L156 29.5 Z" fill="#178d82"/><rect x="150" y="-23.5" width="56" height="53" fill="url(#gth)"/><path d="M159.0 -23 A10 26 0 0 1 159.0 29M162.3 -23 A10 26 0 0 1 162.3 29M165.6 -23 A10 26 0 0 1 165.6 29M168.9 -23 A10 26 0 0 1 168.9 29M172.2 -23 A10 26 0 0 1 172.2 29M175.5 -23 A10 26 0 0 1 175.5 29M178.8 -23 A10 26 0 0 1 178.8 29M182.1 -23 A10 26 0 0 1 182.1 29M185.4 -23 A10 26 0 0 1 185.4 29M188.7 -23 A10 26 0 0 1 188.7 29M192.0 -23 A10 26 0 0 1 192.0 29M195.3 -23 A10 26 0 0 1 195.3 29M198.6 -23 A10 26 0 0 1 198.6 29M201.9 -23 A10 26 0 0 1 201.9 29" fill="none" stroke="#0e6f66" stroke-width="1.2"/><path d="M46 -38 L157 -38 A11 36.2 0 0 1 157 34.5 L46 34.5 A11 36.2 0 0 1 46 -38 Z" fill="url(#gbody)"/><clipPath id="bclip"><path d="M46 -38 L157 -38 A11 36.2 0 0 1 157 34.5 L46 34.5 A11 36.2 0 0 1 46 -38 Z"/></clipPath><g clip-path="url(#bclip)"><path d="M40 -38 L134 -38 L134 -34 L40 -34 Z" fill="#1a9388"/><path d="M40 -34 L136 -34 L136 -11 L40 -11 Z" fill="#127a71"/><path d="M40 -34 L134 -34 L134 -31.5 L40 -31.5 Z" fill="#0b5e57"/><path d="M40 -15 L134 -15 L134 -11 L40 -11 Z" fill="#1a9186"/><path d="M131 -34 L136 -34 L136 -11 L131 -11 Z" fill="#0c625a"/></g><ellipse cx="46" cy="-1.7" rx="11" ry="36.2" fill="#11796f"/><ellipse cx="46.5" cy="-1.7" rx="9.5" ry="33" fill="#168a7f"/><ellipse cx="48" cy="3" rx="6.5" ry="20" fill="#1f9f91"/></g></svg>
<div class="a" style="left:502px;top:45px;width:556px;height:32px;background:#f6f6f6"></div>
<svg class="a" style="left:505px;top:49px;" width="27" height="24" viewBox="0 0 27 24"><g fill="none" stroke="#4a4a4a" stroke-width="1" stroke-linejoin="round"><path d="M1.3 21.4V7.7L7.5 1.3H21.4L15.5 7.7H1.3M15.5 7.7V21.4H1.3M21.4 1.3V12"/><circle cx="22.1" cy="16.8" r="4.7" fill="#f6f6f6"/><path d="M22.1 13.6V20M18.9 16.8H25.3"/></g></svg>
<svg class="a" style="left:536px;top:49px;" width="25" height="24" viewBox="0 0 25 24"><g fill="none" stroke="#4a4a4a" stroke-width="1" stroke-linejoin="round"><path d="M1.1 1.3H20.6V20.9H1.1Z"/><path d="M5 1.3V20.9M8.9 1.3V20.9M12.8 1.3V20.9M16.7 1.3V20.9M1.1 5.2H20.6M1.1 9.1H20.6M1.1 13H20.6M1.1 16.9H20.6" stroke-width="0.8" stroke="#666"/><circle cx="18.7" cy="17.5" r="4.6" fill="#f6f6f6"/><path d="M18.7 14.3V20.7M15.5 17.5H21.9"/></g></svg>
<svg class="a" style="left:565px;top:49px;" width="26" height="24" viewBox="0 0 26 24"><g fill="none" stroke="#4a4a4a" stroke-width="1" stroke-linejoin="round"><path d="M12.1 1.8L24.4 5.3L20.9 17.5L9.2 14Z"/><rect x="3.8" y="20.4" width="20.1" height="1.9" rx="0.9" fill="#bbb"/><path d="M2.4 18.4L3.4 13.6L7.3 15Z M7.8 10.6L5.3 15.5"/><text x="1.4" y="8.2" font-size="3.6" font-family="Liberation Sans" font-weight="bold" fill="#4a4a4a" stroke="none">AUTO</text></g></svg>
<svg class="a" style="left:595px;top:49px;" width="24" height="24" viewBox="0 0 24 24"><g fill="none" stroke="#4a4a4a" stroke-width="1" stroke-linejoin="round"><rect x="1.2" y="1.3" width="21.5" height="21.5" rx="1.5"/><rect x="3.6" y="3.8" width="16.6" height="5.8" rx="0.8" stroke="#888"/><rect x="4.1" y="11.6" width="4.4" height="9.3" rx="0.8" stroke="#888"/><rect x="10.5" y="11.6" width="9.7" height="2.9" rx="0.8" stroke="#888"/><rect x="10.5" y="16.5" width="9.7" height="3.9" rx="0.8" stroke="#888"/></g></svg>
<svg class="a" style="left:631px;top:49px;" width="23" height="25" viewBox="0 0 23 25"><g fill="none" stroke="#c9c9c9" stroke-width="1" stroke-linejoin="round"><path d="M1.3 19.4V1.3H13L16.5 4.5V6"/><path d="M5.2 23.5V4.3H17.2L20.9 7.8V23.5Z" fill="#f6f6f6"/><ellipse cx="13" cy="14.5" rx="3" ry="4.8"/></g></svg>
<svg class="a" style="left:660px;top:49px;" width="23" height="25" viewBox="0 0 23 25"><g fill="none" stroke="#c9c9c9" stroke-width="1" stroke-linejoin="round"><path d="M1.3 19.4V1.3H13L16.5 4.5V6"/><path d="M5.2 23.5V4.3H17.2L20.9 7.8V23.5Z" fill="#f6f6f6"/><path d="M10 19V10H13.5C16.5 10 16.5 15 13.5 15H10"/></g></svg>
<svg class="a" style="left:690px;top:49px;" width="26" height="24" viewBox="0 0 26 24"><g fill="none" stroke="#c9c9c9" stroke-width="1" stroke-linejoin="round"><path d="M1.5 5H19.5"/><rect x="1.5" y="7.5" width="18" height="3" rx="1" fill="#e6e6e6"/><rect x="1.5" y="12" width="18" height="3" rx="1" fill="#e6e6e6"/><rect x="1.5" y="16.5" width="18" height="3" rx="1" fill="#e6e6e6"/></g></svg>
<div class="a" style="left:726px;top:51.5px;width:1.3px;height:20px;background:#a9a9a9"></div>
<svg class="a" style="left:738px;top:49px;" width="26" height="24" viewBox="0 0 26 24"><g fill="none" stroke="#c9c9c9" stroke-width="1" stroke-linejoin="round"><path d="M12.6 1.3L16.3 5L14.7 6.8H10.5L8.9 5Z M12.6 22.7L16.3 19L14.7 17.2H10.5L8.9 19Z M1.3 12L5 8.3L6.8 9.9V14.1L5 15.7Z M23.9 12L20.2 8.3L18.4 9.9V14.1L20.2 15.7Z"/><circle cx="12.6" cy="12" r="1.4"/></g></svg>
<svg class="a" style="left:769px;top:49px;" width="26" height="25" viewBox="0 0 26 25"><g fill="none" stroke="#c9c9c9" stroke-width="1" stroke-linejoin="round"><path d="M14.9 7.7L22.5 15.5L14.9 23.3L7.3 15.5Z"/><path d="M3.2 12C2.5 5 9 0.5 15 2.2C17.5 3 19.5 4.5 20.5 6"/><path d="M18.6 7.8L23.2 4L24 9.5Z"/></g></svg>
<svg class="a" style="left:798px;top:49px;" width="26" height="24" viewBox="0 0 26 24"><g fill="none" stroke="#c9c9c9" stroke-width="1" stroke-linejoin="round"><rect x="1.5" y="10" width="11" height="11"/><path d="M1.5 2H22V21H12M1.5 2V10" stroke-dasharray="2 2"/><path d="M14 9L20 3M16 3H20V7"/></g></svg>
<svg class="a" style="left:828px;top:49px;" width="26" height="24" viewBox="0 0 26 24"><g fill="none" stroke="#c9c9c9" stroke-width="1" stroke-linejoin="round"><path d="M11.2 1.8L23.5 4.5L21.2 17.5L9 14.9Z"/><rect x="5" y="20.4" width="19.5" height="1.9" rx="0.9"/><path d="M3.5 18.5L4.5 12.5L8.5 14.5Z M9.5 11L6.5 15"/></g></svg>
<svg class="a" style="left:859px;top:49px;" width="26" height="24" viewBox="0 0 26 24"><g fill="none" stroke="#c9c9c9" stroke-width="1" stroke-linejoin="round"><rect x="1.5" y="2" width="20" height="8" rx="1"/><rect x="1.5" y="13" width="20" height="8" rx="1"/></g></svg>
<svg class="a" style="left:888px;top:49px;" width="26" height="24" viewBox="0 0 26 24"><g fill="none" stroke="#c9c9c9" stroke-width="1" stroke-linejoin="round"><rect x="1.5" y="8" width="14" height="13"/><rect x="8.5" y="1.5" width="14" height="13"/><rect x="8.5" y="8" width="7" height="6.5" fill="#ddd"/></g></svg>
<svg class="a" style="left:919px;top:49px;" width="26" height="24" viewBox="0 0 26 24"><g fill="none" stroke="#c9c9c9" stroke-width="1" stroke-linejoin="round"><path d="M1.5 2H21.5V21H12V9H8V21H1.5Z"/><rect x="2" y="9" width="6" height="12" fill="#ddd" stroke="none"/></g></svg>
<svg class="a" style="left:949px;top:49px;" width="26" height="24" viewBox="0 0 26 24"><g fill="none" stroke="#c9c9c9" stroke-width="1" stroke-linejoin="round"><path d="M1.5 7L7 1.5H21V16L15.5 21.5H1.5Z M1.5 7H15.5V21.5 M15.5 7L21 1.5"/><path d="M6 8C8 12 7 16 9 21"/></g></svg>
<svg class="a" style="left:979px;top:49px;" width="26" height="24" viewBox="0 0 26 24"><g fill="none" stroke="#c9c9c9" stroke-width="1" stroke-linejoin="round"><path d="M2 2H18V5H11.5V21H8.5V5H2Z"/><text x="14" y="21" font-size="9" font-family="Liberation Sans" fill="none" stroke="#c9c9c9" stroke-width="0.8">a</text></g></svg>
<div class="a" style="left:1015.5px;top:51.5px;width:1.3px;height:20px;background:#a9a9a9"></div>
<svg class="a" style="left:1028px;top:50px;" width="26" height="24" viewBox="0 0 26 24"><g fill="none" stroke="#4a4a4a" stroke-width="1" stroke-linejoin="round"><path d="M1.4 5.5H9.5V12H1.4Z M1.4 12V21.6C1.4 22.2 1.8 22.6 2.4 22.6H10V18C8.2 18.5 7.6 16 9 15.2C9.4 14.9 10 15 10 15V12H6.5C6.8 13.5 4.5 14 4.2 12.5V12Z M10 12V14.5C11.5 14 12.5 16.5 10.5 17.5H10V22.6H17.9C18.5 22.6 18.9 22.2 18.9 21.6V12H15.5C15.5 10.5 13 10.5 13.5 12Z"/><path d="M10.5 6.8L16.8 0.6L23 6.8L16.8 13Z M13.6 9.9C12.2 11.3 14.2 13.3 15.6 11.9"/></g></svg>
<div class="a" style="left:0px;top:688px;width:1280px;height:32px;background:#dcdddd;border-top:1px solid #c9caca"></div>
<svg class="a" style="left:10px;top:690px;" width="24" height="20" viewBox="0 0 24 20"><path d="M4 17H19C22.5 17 22.5 12 19.5 11.5C19.5 8 15 7 13 9.5C11 7.5 7 8.5 7 12C4 12 2.5 17 4 17Z" fill="#c7dcf3" stroke="#a9c6e8" stroke-width="0.8"/><circle cx="15" cy="7" r="5.4" fill="#c42b1c"/><text x="15" y="10" text-anchor="middle" font-size="8" font-family="Liberation Sans" fill="#fff">1</text></svg>
<div class="a" style="left:33.7px;top:695.24px;font-size:7.4px;line-height:1;color:#1f1f1f;font-weight:bold;">48°F</div>
<div class="a" style="left:33.7px;top:705.57px;font-size:7.6px;line-height:1;color:#5f5f5f;font-weight:normal;">Cloudy</div>
<svg class="a" style="left:425px;top:696px;" width="17" height="17" viewBox="0 0 17 17"><g fill="#1b78d0"><rect x="0.5" y="0.5" width="7.5" height="7.5" rx="0.6" fill="#2a8ae0"/><rect x="9" y="0.5" width="7.5" height="7.5" rx="0.6" fill="#2d90e6"/><rect x="0.5" y="9" width="7.5" height="7.5" rx="0.6" fill="#1a6fc9"/><rect x="9" y="9" width="7.5" height="7.5" rx="0.6" fill="#1f7bd4"/></g></svg>
<div class="a" style="left:450.5px;top:694.5px;width:145px;height:20px;background:#f5f6f6;border:1px solid #d2d3d3;border-radius:10px"></div>
<svg class="a" style="left:456px;top:699px;" width="12" height="12" viewBox="0 0 12 12"><circle cx="5" cy="5" r="3.6" fill="none" stroke="#1d5fa8" stroke-width="1.4"/><path d="M7.6 7.6L11 11" stroke="#1d5fa8" stroke-width="1.5"/></svg>
<div class="a" style="left:474.0px;top:699.97px;font-size:8.9px;line-height:1;color:#5a5a5a;font-weight:normal;">Search</div>
<svg class="a" style="left:563px;top:694px;" width="32" height="20" viewBox="0 0 32 20"><path d="M2 17C6 14 26 14 31 18H2Z" fill="#7aa24a"/><ellipse cx="16" cy="10.5" rx="10" ry="6.5" fill="#8b6a4b"/><ellipse cx="8" cy="10" rx="5" ry="4.5" fill="#9a7a58"/><circle cx="6" cy="9" r="0.8" fill="#222"/><path d="M10 16V18M20 16V18" stroke="#5a4330" stroke-width="2"/></svg>
<svg class="a" style="left:604px;top:697px;" width="16" height="16" viewBox="0 0 16 16"><rect x="5" y="0.5" width="10.5" height="10.5" fill="#d6d6d6" stroke="#bdbdbd" stroke-width="0.6"/><rect x="0.5" y="4.5" width="11" height="11" fill="#1f1f1f"/><rect x="2.2" y="6.2" width="7.5" height="7.5" fill="#fff"/></svg>
<svg class="a" style="left:633px;top:696px;" width="17" height="17" viewBox="0 0 17 17"><circle cx="8.5" cy="8.5" r="8" fill="#6c6fd8"/><rect x="4" y="5.5" width="7" height="6" rx="1.2" fill="#fff"/><path d="M11 7.5L13.5 6V11L11 9.5Z" fill="#fff"/></svg>
<svg class="a" style="left:662px;top:696px;" width="18" height="17" viewBox="0 0 18 17"><path d="M0.5 2.5H6.5L8 4H17.5V15.5H0.5Z" fill="#e9b23c"/><path d="M0.5 5.5H17.5V15.5H0.5Z" fill="#ffd25e"/><rect x="5" y="11" width="8" height="3" fill="#2f7ad6"/></svg>
<svg class="a" style="left:691px;top:696px;" width="18" height="18" viewBox="0 0 18 18"><circle cx="9" cy="9" r="8.3" fill="#1e8fd9"/><path d="M2 11C3 5 13 3 15.5 9C14 7 9 7 8.5 10.5C8.5 13.5 12 15 15.5 13C13 17 5 17 2 11Z" fill="#5fd36a" opacity="0.85"/><path d="M8.8 10.5C9 8 12.5 7.5 14 9.5" fill="none" stroke="#fff" stroke-width="0.8" opacity="0.6"/></svg>
<svg class="a" style="left:721px;top:696px;" width="17" height="17" viewBox="0 0 17 17"><rect x="0.5" y="3.5" width="16" height="13" rx="2" fill="#1c5fa5"/><path d="M5 3.5V2C5 0.6 12 0.6 12 2V3.5" fill="none" stroke="#1c5fa5" stroke-width="1.2"/><rect x="4.5" y="6.5" width="3.5" height="3.5" fill="#f25022"/><rect x="9" y="6.5" width="3.5" height="3.5" fill="#7fba00"/><rect x="4.5" y="11" width="3.5" height="3.5" fill="#00a4ef"/><rect x="9" y="11" width="3.5" height="3.5" fill="#ffb900"/></svg>
<svg class="a" style="left:752px;top:698px;" width="14" height="14" viewBox="0 0 14 14"><circle cx="7" cy="7" r="6.6" fill="#1c86e0"/><path d="M3.5 10.5L10.5 3.5M6 4.5L10.5 3.5L9.5 8" fill="none" stroke="#fff" stroke-width="1.3"/></svg>
<svg class="a" style="left:780px;top:696px;" width="17" height="17" viewBox="0 0 17 17"><circle cx="8.5" cy="8.5" r="8" fill="#db4437"/><path d="M8.5 8.5L1.6 12.5A8 8 0 0 0 12.5 15.4Z" fill="#0f9d58"/><path d="M8.5 8.5L12.5 15.4A8 8 0 0 0 15.4 4.5H8.5Z" fill="#f4b400"/><circle cx="8.5" cy="8.5" r="3.8" fill="#fff"/><circle cx="8.5" cy="8.5" r="3" fill="#4285f4"/></svg>
<div class="a" style="left:806px;top:693px;width:25px;height:22px;background:#eeeeee;border-radius:4px"></div>
<svg class="a" style="left:811px;top:696px;" width="15" height="17" viewBox="0 0 15 17"><path d="M3 1.5H10L11.5 4L9 6L12 9L8.5 15.5H3Z" fill="#1b1b1b"/><path d="M5 5L9 7.5L5 10Z" fill="#0a9a6c"/></svg>
<div class="a" style="left:812px;top:712.5px;width:13px;height:2px;background:#2b6fc8;border-radius:1px"></div>
<svg class="a" style="left:839px;top:696px;" width="17" height="18" viewBox="0 0 17 18"><rect x="0.5" y="0.5" width="16" height="17" rx="1.5" fill="#f27b18"/><path d="M5 13V4H11M5 8H10" stroke="#fff" stroke-width="1.6" fill="none"/><rect x="4" y="14" width="9" height="2" fill="#b35208"/></svg>
<div class="a" style="left:668px;top:714px;width:6px;height:1.5px;background:#8a8a8a;border-radius:1px"></div>
<div class="a" style="left:786px;top:714px;width:6px;height:1.5px;background:#8a8a8a;border-radius:1px"></div>
<div class="a" style="left:844px;top:714px;width:6px;height:1.5px;background:#8a8a8a;border-radius:1px"></div>
<svg class="a" style="left:1113px;top:700px;" width="11" height="8" viewBox="0 0 11 8"><path d="M1 6.5L5.5 2L10 6.5" fill="none" stroke="#2a2a2a" stroke-width="1.1"/></svg>
<svg class="a" style="left:1133px;top:698px;" width="15" height="13" viewBox="0 0 15 13"><path d="M2 9C0.5 9 0.5 5.5 2.5 5.5C3 2.5 7 1.5 8.5 4C10.5 3 12.5 5 11.5 7" fill="none" stroke="#3a3a3a" stroke-width="1"/><path d="M2 9H7" stroke="#3a3a3a" stroke-width="1"/><circle cx="10.5" cy="9" r="3.5" fill="#d8333a"/><path d="M9 7.5L12 10.5M12 7.5L9 10.5" stroke="#fff" stroke-width="0.9"/></svg>
<svg class="a" style="left:1155px;top:698px;" width="12" height="11" viewBox="0 0 12 11"><path d="M1 4.5C4 1 8 1 11 4.5M2.8 6.5C4.8 4.3 7.2 4.3 9.2 6.5M4.5 8.3C5.5 7.3 6.5 7.3 7.5 8.3" fill="none" stroke="#2a2a2a" stroke-width="1"/><circle cx="6" cy="9.8" r="0.9" fill="#2a2a2a"/></svg>
<svg class="a" style="left:1171px;top:698px;" width="11" height="11" viewBox="0 0 11 11"><path d="M1 4H3L6 1.5V9.5L3 7H1Z" fill="none" stroke="#2a2a2a" stroke-width="0.9"/><path d="M7.5 3.5C8.5 4.5 8.5 6.5 7.5 7.5M9 2C10.8 4 10.8 7 9 9" fill="none" stroke="#2a2a2a" stroke-width="0.9"/></svg>
<svg class="a" style="left:1187px;top:698px;" width="13" height="11" viewBox="0 0 13 11"><rect x="1" y="3" width="10" height="6.5" rx="1" fill="#3a3a3a"/><rect x="11" y="5" width="1.5" height="2.5" fill="#3a3a3a"/><path d="M3 1L5 4L3.5 5" fill="none" stroke="#3a3a3a" stroke-width="0.8"/></svg>
<div class="a" style="right:29.0px;top:695.44px;font-size:8.1px;line-height:1;color:#1c1c1c;font-weight:normal;">12:43 AM</div>
<div class="a" style="right:29.0px;top:706.00px;font-size:8.15px;line-height:1;color:#1c1c1c;font-weight:normal;">10/31/2023</div>
<svg class="a" style="left:1256px;top:698px;" width="11" height="12" viewBox="0 0 11 12"><path d="M5.5 1C3 1 2 3 2 5V8L1 9.5H10L9 8V5C9 3 8 1 5.5 1Z" fill="#1a5fb4"/><path d="M4 10.5C4 12 7 12 7 10.5" fill="#1a5fb4"/></svg></body></html>
